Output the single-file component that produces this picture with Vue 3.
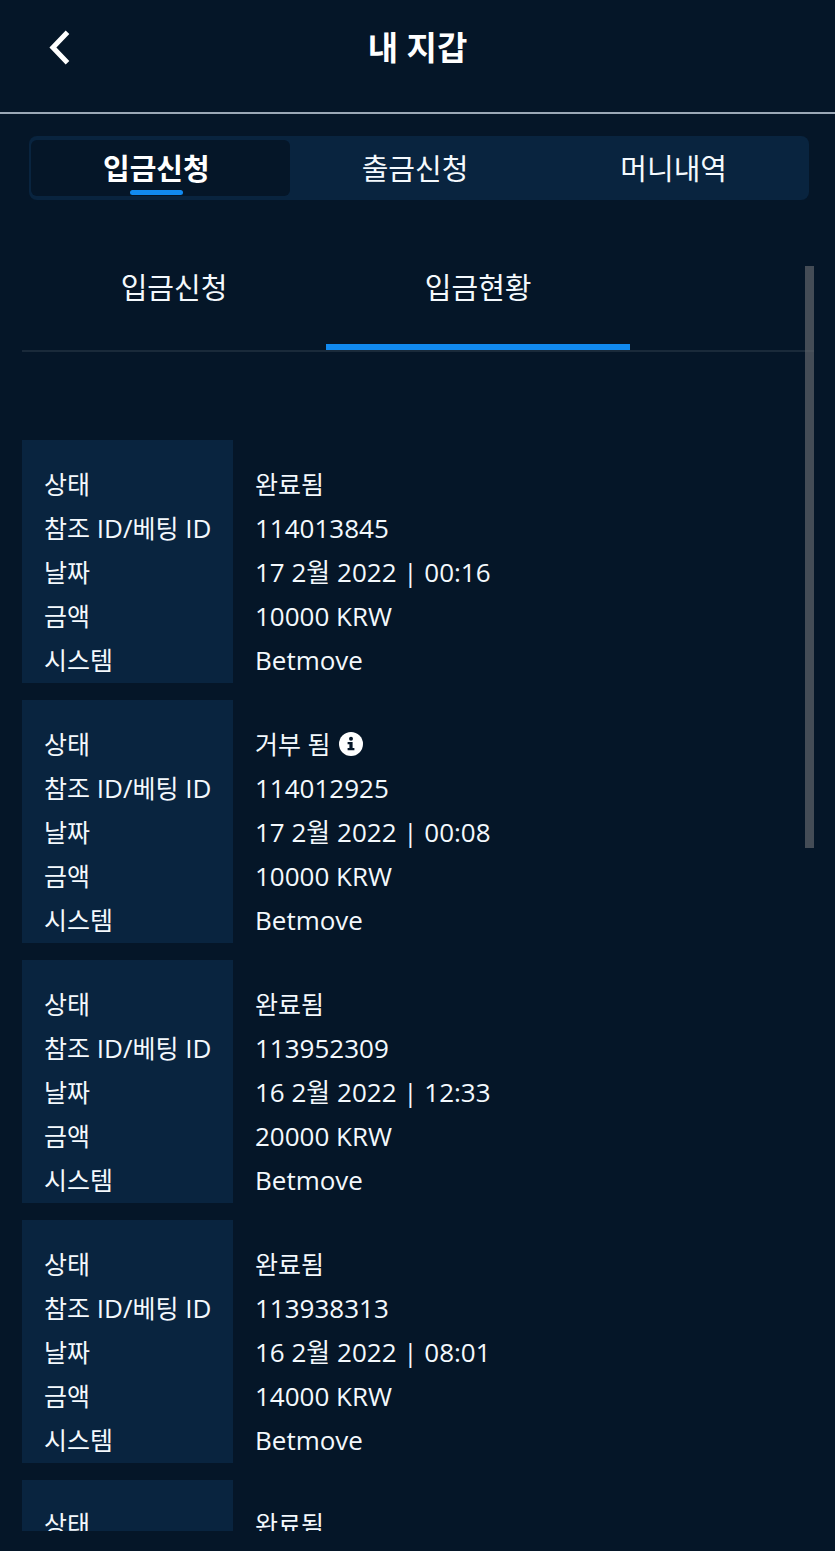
<script setup>
import { ref } from 'vue'

const sections = [
  { id: 'deposit', label: '입금신청' },
  { id: 'withdraw', label: '출금신청' },
  { id: 'history', label: '머니내역' },
]

const views = [
  { id: 'request', label: '입금신청' },
  { id: 'status', label: '입금현황' },
]

const activeSection = ref('deposit')
const activeView = ref('status')

const records = [
  { id: '114013845', status: '완료됨', date: '17 2월 2022 | 00:16', amount: '10000 KRW', system: 'Betmove' },
  { id: '114012925', status: '거부 됨', rejected: true, date: '17 2월 2022 | 00:08', amount: '10000 KRW', system: 'Betmove' },
  { id: '113952309', status: '완료됨', date: '16 2월 2022 | 12:33', amount: '20000 KRW', system: 'Betmove' },
  { id: '113938313', status: '완료됨', date: '16 2월 2022 | 08:01', amount: '14000 KRW', system: 'Betmove' },
  { status: '완료됨' },
]
</script>

<template>
  <div class="wallet">
    <header class="top-bar">
      <button class="back" type="button" aria-label="뒤로">
        <svg viewBox="0 0 22 36" width="22" height="36" aria-hidden="true">
          <path d="M18.5 2.2 3.9 17.5l14.6 15.3" fill="none" stroke="currentColor" stroke-width="5" />
        </svg>
      </button>
      <h1>내 지갑</h1>
    </header>

    <nav class="sections">
      <button
        v-for="section in sections"
        :key="section.id"
        type="button"
        :class="['section', { active: section.id === activeSection }]"
        @click="activeSection = section.id"
      >
        <span>{{ section.label }}</span>
      </button>
    </nav>

    <main class="panel">
      <div class="views">
        <button
          v-for="view in views"
          :key="view.id"
          type="button"
          :class="['view', { active: view.id === activeView }]"
          @click="activeView = view.id"
        >
          {{ view.label }}
        </button>
      </div>

      <div class="records">
        <table v-for="(record, index) in records" :key="index" class="record">
          <tbody>
            <tr>
              <th scope="row" class="ko">상태</th>
              <td class="ko">
                <span class="status">
                  {{ record.status }}
                  <button v-if="record.rejected" class="info" type="button" aria-label="정보">
                    <svg viewBox="0 0 24 24" width="24" height="24" aria-hidden="true">
                      <circle cx="12" cy="12" r="12" fill="#fff" />
                      <circle cx="12" cy="6.8" r="2" fill="#051628" />
                      <path d="M8.6 10h5v6h1.8v2.2H8.6V16h1.8v-3.8H8.6z" fill="#051628" />
                    </svg>
                  </button>
                </span>
              </td>
            </tr>
            <template v-if="record.id">
              <tr>
                <th scope="row"><span class="ko">참조</span> ID/<span class="ko">베팅</span> ID</th>
                <td>{{ record.id }}</td>
              </tr>
              <tr>
                <th scope="row" class="ko">날짜</th>
                <td>{{ record.date }}</td>
              </tr>
              <tr>
                <th scope="row" class="ko">금액</th>
                <td>{{ record.amount }}</td>
              </tr>
              <tr>
                <th scope="row" class="ko">시스템</th>
                <td>{{ record.system }}</td>
              </tr>
            </template>
          </tbody>
        </table>
      </div>

      <div class="scroll-thumb"></div>
    </main>
  </div>
</template>

<style>
body {
  margin: 0;
  background: #051628;
}
</style>

<style scoped>
.wallet {
  display: flex;
  flex-direction: column;
  box-sizing: border-box;
  height: 100vh;
  padding-bottom: 20px;
  overflow: hidden;
  background: #051628;
  color: #f4f9fd;
  font-family: 'Open Sans', 'Noto Sans CJK KR', sans-serif;
  font-size: 26px;
}
button {
  padding: 0;
  border: 0;
  background: none;
  color: inherit;
  font: inherit;
  cursor: pointer;
}
svg { display: block; }
.top-bar {
  display: grid;
  grid-template-columns: 71px 1fr 71px;
  align-items: center;
  flex: none;
  height: 96px;
  padding-bottom: 16px;
  border-bottom: 2px solid #9ba8b6;
  color: #fff;
}
.back {
  justify-self: end;
}
.top-bar h1 {
  margin: 0;
  font-size: 33px;
  line-height: 48px;
  font-weight: 700;
  text-align: center;
}
.sections {
  display: flex;
  flex: none;
  box-sizing: border-box;
  height: 64px;
  margin: 22px 26px 0 29px;
  padding: 4px 2px;
  border-radius: 8px;
  background: #09243f;
}
.section {
  display: flex;
  flex: 1;
  justify-content: center;
  padding-right: 8px;
  border-radius: 6px;
  font-size: 29px;
  line-height: 58px;
}
.section span {
  position: relative;
}
.section.active {
  background: #051628;
  color: #fff;
  font-weight: 700;
}
.section.active span::after {
  content: '';
  position: absolute;
  left: 25%;
  right: 25%;
  bottom: 1px;
  height: 5px;
  border-radius: 3px;
  background: #118af0;
}
.panel {
  position: relative;
  flex: 1;
  min-height: 0;
  margin: 66px 21px 0 22px;
  overflow: hidden;
}
.views {
  display: flex;
  border-bottom: 2px solid #1a2a3a;
}
.view {
  flex: 0 0 38.4%;
  padding-bottom: 34px;
  border-bottom: 6px solid transparent;
  font-size: 29px;
  line-height: 44px;
}
.view.active {
  border-bottom-color: #118af0;
}
.records {
  display: grid;
  gap: 17px;
  padding-top: 88px;
}
.record {
  width: 100%;
  border-spacing: 0;
  table-layout: fixed;
}
.record th,
.record td {
  height: 44px;
  padding: 0 0 0 22px;
  line-height: 44px;
  font-weight: 400;
  text-align: left;
  white-space: nowrap;
}
.record th {
  width: 189px;
  background: #09243f;
}
.record tr:first-child th,
.record tr:first-child td {
  padding-top: 22px;
}
.record tr:last-child th,
.record tr:last-child td {
  padding-bottom: 1px;
}
.ko { font-size: 25px; }
.status {
  display: flex;
  align-items: center;
  gap: 8px;
}
.scroll-thumb {
  position: absolute;
  top: 0;
  right: 0;
  width: 9px;
  height: 46%;
  background: rgba(96, 100, 106, 0.7);
}
</style>
